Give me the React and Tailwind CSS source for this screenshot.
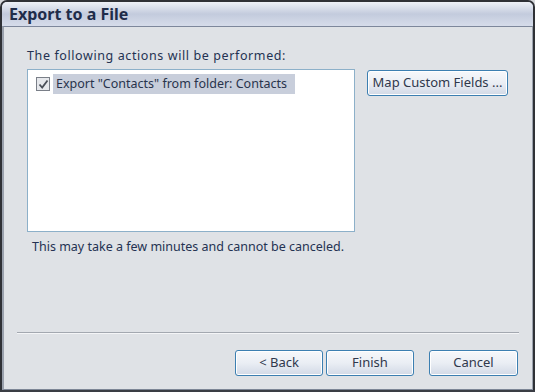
import React from 'react';

function WinButton({ children, className = '' }) {
  return (
    <button
      className={`h-[26px] rounded-[3px] border border-[#3c7fb1] bg-gradient-to-b from-[#f6f8fb] via-[#eaeef4] to-[#d2d9e6] text-[13px] text-[#2f384c] shadow-[inset_0_0_0_1px_#ffffff] ${className}`}
    >
      {children}
    </button>
  );
}

export default function App() {
  return (
    <div
      className="w-[535px] h-[392px] bg-[#d6d8dc] overflow-hidden"
      style={{ fontFamily: '"Noto Sans", "DejaVu Sans", sans-serif' }}
    >
      <div className="flex flex-col w-full h-[390px] rounded-t-[7px] border-2 border-b-0 border-[#2f3136] bg-[#b9c3d6]">
        {/* title bar */}
        <div className="h-[24px] shrink-0 rounded-t-[5px] bg-gradient-to-b from-[#eef1f7] via-[#c3cbdd] to-[#d6dcea] px-[7px] flex items-center">
          <span className="text-[16px] font-bold text-[#1f2c4a] leading-none">Export to a File</span>
        </div>
        <div className="flex-1 flex flex-col border-t border-[#7d879b] border-l-[2px] border-l-[#9aa1ad] border-r border-r-[#9aa1ad] border-b border-b-[#7d8696] bg-[#dfe2e6]">
          <div className="flex-1 flex flex-col pl-[23px] pr-[14px]">
            <div className="pt-[20px] text-[12.5px] tracking-[0.6px] text-[#243252] leading-[18px]">
              The following actions will be performed:
            </div>
            <div className="flex gap-[12px] mt-[4px]">
              <div className="w-[328px] h-[163px] border border-[#8cb0c9] bg-white pt-[4px] pl-[8px]">
                <div className="flex items-center">
                  <span className="w-[14px] h-[14px] border border-[#7a7f88] bg-[#e6e8ec] flex items-center justify-center">
                    <svg width="11" height="11" viewBox="0 0 11 11">
                      <path d="M1.5 5.5 L4.2 8.5 L9.5 1.5" fill="none" stroke="#4a4f58" strokeWidth="1.8" />
                    </svg>
                  </span>
                  <span className="ml-[3px] bg-[#c8cedb] h-[20px] pl-[3px] pr-[8px] flex items-center text-[12.5px] text-[#29344c] whitespace-nowrap">
                    Export "Contacts" from folder: Contacts
                  </span>
                </div>
              </div>
              <WinButton className="w-[141px] mt-[1px]">Map Custom Fields ...</WinButton>
            </div>
            <div className="pl-[5px] mt-[6px] text-[12.5px] text-[#243252] leading-[18px]">
              This may take a few minutes and cannot be canceled.
            </div>
          </div>
          <div className="mx-[13px] border-t border-[#a3a8b0] border-b border-b-[#f4f5f7]" />
          <div className="h-[55px] flex items-start justify-end pt-[16px] pr-[14px]">
            <WinButton className="w-[88px]">&lt; Back</WinButton>
            <WinButton className="w-[88px] ml-[3px]">Finish</WinButton>
            <WinButton className="w-[89px] ml-[15px]">Cancel</WinButton>
          </div>
        </div>
      </div>
      <div className="h-[2px] bg-[#3a3d44]" />
    </div>
  );
}
